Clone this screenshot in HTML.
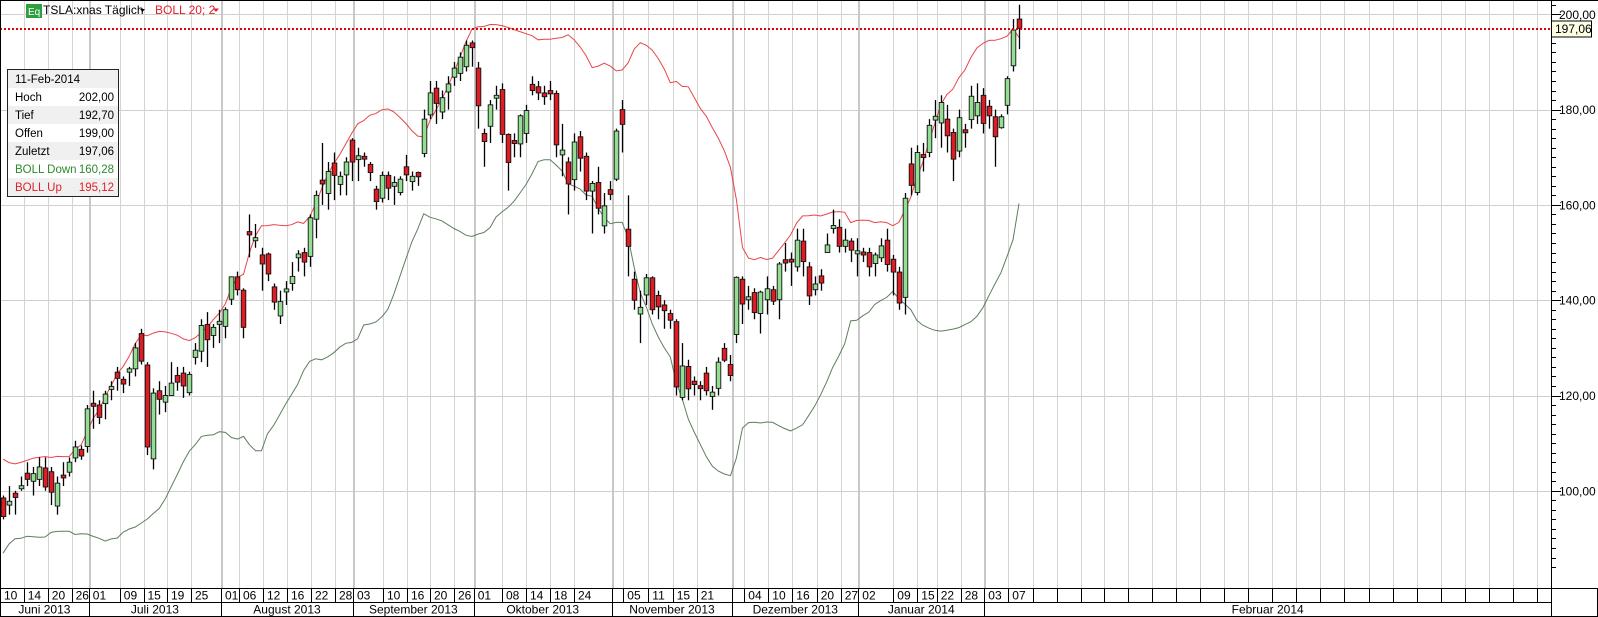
<!DOCTYPE html>
<html><head><meta charset="utf-8"><style>
html,body{margin:0;padding:0;background:#fff;width:1598px;height:617px;overflow:hidden}
svg{display:block;font-family:"Liberation Sans",Arial,sans-serif}
</style></head><body>
<svg id="c" width="1598" height="617" viewBox="0 0 1598 617" xmlns="http://www.w3.org/2000/svg">
<rect x="0" y="0" width="1598" height="617" fill="#fff"/>
<g id="grid"></g>
<g id="bands"></g>
<g id="candles"></g>
<line x1="0" y1="29" x2="1551" y2="29" stroke="#e00000" stroke-width="2" stroke-dasharray="2,2"/>
<line x1="0.5" y1="0" x2="0.5" y2="588" stroke="#000"/>
<line x1="0" y1="0.5" x2="1598" y2="0.5" stroke="#000"/>
<line x1="1551.5" y1="0" x2="1551.5" y2="588" stroke="#000"/>
<g id="axis" font-size="12" fill="#000"></g>
<rect x="1551.5" y="21" width="40" height="16" fill="#ffffe6" stroke="#000"/>
<text x="1555" y="33" font-size="12">197,06</text>
<g id="dates" font-size="12"></g>
<rect x="26" y="4" width="16" height="14" fill="#2e9e3e"/>
<text x="28" y="15" font-size="10" fill="#fff">Eq</text>
<text x="43" y="14" font-size="12" fill="#000">TSLA:xnas Täglich</text>
<path d="M140 9 L145 9 L142.5 12 Z" fill="#000"/>
<text x="155" y="14" font-size="12" fill="#e0202a">BOLL 20; 2</text>
<path d="M213 8.5 L219 8.5 L216 12 Z" fill="#e0202a"/>
<rect x="7.5" y="69.5" width="111" height="127" fill="#fff" stroke="#222"/>
<rect x="8" y="70" width="110" height="18" fill="#f0f0f0"/>
<rect x="8" y="106" width="110" height="18" fill="#f0f0f0"/>
<rect x="8" y="142" width="110" height="18" fill="#f0f0f0"/>
<rect x="8" y="178" width="110" height="18" fill="#f0f0f0"/>
<g font-size="11.5">
<text x="15" y="83">11-Feb-2014</text>
<text x="15" y="101">Hoch</text><text x="114" y="101" text-anchor="end">202,00</text>
<text x="15" y="119">Tief</text><text x="114" y="119" text-anchor="end">192,70</text>
<text x="15" y="137">Offen</text><text x="114" y="137" text-anchor="end">199,00</text>
<text x="15" y="155">Zuletzt</text><text x="114" y="155" text-anchor="end">197,06</text>
<text x="15" y="173" fill="#2a8a2a">BOLL Down</text><text x="114" y="173" text-anchor="end" fill="#2a8a2a">160,28</text>
<text x="15" y="191" fill="#e0202a">BOLL Up</text><text x="114" y="191" text-anchor="end" fill="#e0202a">195,12</text>
</g>
</svg>
<script>
(function(){
var NS="http://www.w3.org/2000/svg";
function el(p,t,a,txt){var e=document.createElementNS(NS,t);for(var k in a)e.setAttribute(k,a[k]);if(txt!==undefined)e.textContent=txt;p.appendChild(e);return e;}
function Y(p){return 14.3+(200-p)*4.765;}
var grid=document.getElementById('grid'),axis=document.getElementById('axis'),dates=document.getElementById('dates');
for(var p=100;p<=200;p+=20){var y=Math.round(Y(p))+0.5;el(grid,'line',{x1:0,y1:y,x2:1551,y2:y,stroke:'#d0d0d0'});
el(axis,'text',{x:1559,y:Y(p)+4.5},(p.toFixed(2)).replace('.',','));}
for(var p=84;p<=202;p+=2){var y=Math.round(Y(p))+0.5;var L=(p%20==0)?10:5;el(axis,'line',{x1:1551,y1:y,x2:1551+L,y2:y,stroke:'#000'});}
var cells=[[0,"10"],[23.7,"14"],[47.8,"20"],[71.6,"26"],[88.8,"01"],[119.8,"09"],[143.5,"15"],[167,"19"],[191,"25"],[221,"01"],[239,"06"],[263,"12"],[287,"16"],[311,"22"],[335,"28"],[353,"03"],[383,"10"],[407,"16"],[430,"20"],[454,"26"],[473.7,"01"],[502,"08"],[526,"14"],[550,"18"],[574,"24"],[611.7,""],[623.3,"05"],[648.3,"11"],[672.7,"15"],[696.7,"21"],[732.3,""],[744.3,"04"],[768.3,"10"],[792.3,"16"],[816.7,"20"],[840.7,"27"],[858.3,"02"],[893.3,"09"],[917.3,"15"],[936.7,"22"],[960.7,"28"],[984.3,"03"],[1008.3,"07"],[1032.7,""],[1056.7,""],[1080.7,""]];
for(var x=1104;x<1540;x+=24.05)cells.push([x,""]);
var months=[0,88.8,221,353,473.7,611.7,732.3,858.3,984.3];
function isMonth(x){for(var i=0;i<months.length;i++)if(Math.abs(months[i]-x)<0.5)return true;return false;}
for(var i=0;i<cells.length;i++){var x=cells[i][0];var xr=Math.round(x)+0.5;
 if(i>0){if(isMonth(x))el(grid,'line',{x1:Math.round(x)+1,y1:0,x2:Math.round(x)+1,y2:588,stroke:'#c8c8c8','stroke-width':2});
 else el(grid,'line',{x1:xr,y1:0,x2:xr,y2:588,stroke:'#d4d4d4'});}
 el(dates,'line',{x1:xr,y1:588,x2:xr,y2:602,stroke:'#000'});
 if(cells[i][1])el(dates,'text',{x:x+4,y:599.5},cells[i][1]);}
el(dates,'line',{x1:0,y1:588.5,x2:1598,y2:588.5,stroke:'#000'});
el(dates,'line',{x1:0,y1:602.5,x2:1551,y2:602.5,stroke:'#000'});
el(dates,'line',{x1:0,y1:616.5,x2:1598,y2:616.5,stroke:'#000'});
el(dates,'line',{x1:1597.5,y1:588,x2:1597.5,y2:617,stroke:'#000'});
var mn=["Juni 2013","Juli 2013","August 2013","September 2013","Oktober 2013","November 2013","Dezember 2013","Januar 2014","Februar 2014"];
var mb=months.concat([1551]);
for(var i=0;i<mn.length;i++){var xr=Math.round(mb[i])+0.5;el(dates,'line',{x1:xr,y1:602,x2:xr,y2:617,stroke:'#000'});
 el(dates,'text',{x:(mb[i]+mb[i+1])/2,y:613.5,'text-anchor':'middle'},mn[i]);}
el(dates,'line',{x1:1551.5,y1:588,x2:1551.5,y2:617,stroke:'#000'});
var D="98.5,94.6,99,94,r|97.8,97,101,95,g|99.5,98.6,100,95,r|101,100.5,103,100,g|103.7,102.4,106,101,r|103.6,102,105,99,g|105,102.4,107,101,g|104.8,100.8,107,100,r|104,99.7,105,97,r|101.6,96.8,103,95,g|103.3,102.7,106,101,r|106,103.9,107,103,g|109.2,106.9,110.5,106,g|108.7,107.3,109.5,106.5,r|117.2,109.3,118,108,g|118.3,117.8,121,113,r|118,115.4,119,114,r|120.3,118.3,121,115,g|121.8,121.4,123,119,g|124.9,123.6,126,121,r|123.4,122.4,124,120.5,r|125.6,124.9,126,122,g|130,125.6,131,124,g|133,127.2,134,126.5,r|126.4,109.2,127,107.5,r|120.5,106.7,121.5,104.5,g|121,119.2,123,116,r|120,118.6,122,116.5,g|122.6,120,127,120,g|124.2,122.8,126,121,r|124.7,122,126,119.5,r|124.4,120.6,125,120,g|129.5,128,131,126.5,g|134.7,129.3,136,127,g|134.9,131.7,137.5,126,r|134.3,132.6,135,130,g|135.5,135,138,131,g|138,134.5,138.5,132,g|144.9,140.2,145,139,g|144.9,142.2,146,141,r|142.1,134.3,142.5,132,r|154.4,153.7,158,149,r|153,152.6,156,151,g|149.5,147.6,151,142,r|149.7,145.5,150,144,r|142.8,139.6,143.5,138,r|139.7,136.7,142,135,g|142.3,141.8,144,139,g|145,143.5,148,142,g|149.7,148.9,150.5,146,g|150,148,151,145,r|157.3,149.2,158,147,g|162,157,163,153,g|165.2,164.4,173,160,r|167,162.4,169,159,g|168.8,166.2,171,161,r|166,164.3,167,162,g|169,166.3,170,162,g|173.6,169,174,165,r|170.3,169.5,172,165,g|170.2,169.6,171,168,r|168.5,166.8,169,165,r|163.3,160.7,164,159,r|166.2,161.4,167,160.5,g|166.2,163.5,167,161,r|164.7,163.9,166,160,g|165.4,162.6,166,162,g|168,166.3,170.5,165,r|166,164.9,167,163,g|166.8,165.9,167,164,r|178,170.8,180,170,g|183.5,178.9,186,178,g|184.5,181.3,186,177,r|182.5,179.5,184,178,g|185.4,183.7,187,180,g|188.7,186.8,190,185,g|191,187.6,192,186,g|193.5,189,194.5,188,g|194,193,194.5,189,r|188.7,180.8,190,176,r|175,173.3,176,168,r|181,176.5,182,173,g|183,182.4,185,180,g|184.2,174.8,185.5,173,r|174.8,168.9,175,163,r|173.4,173,175,170,r|178.7,172.8,179,170,g|179.8,175,181,173,g|185.3,184,187,183,r|184.8,183.5,186,182,r|183.5,182.7,185,181,r|184,183.3,186,182,r|183.4,172.6,184,170,r|171.5,170.5,177,166,g|169,164.4,170,158,r|173.2,165.3,175,163,g|174.3,169.8,175.5,167,r|170.2,162.9,171,161,r|164.5,162.9,165,154,g|164.7,159.3,168,158,r|159.8,155.6,162.5,154,g|163.2,162.2,165,161,r|175.5,165.4,176,165,g|180,176.9,182,171,r|154.9,151.3,162,145,r|144.4,140,146,138,r|138.5,137.1,142,131,g|144.7,141.1,145.5,139,g|144.7,138,145,137,r|141,138.6,142,136,r|139,137.8,140,134,r|137.2,135.8,138,134,r|135.5,121.8,136,120,r|126.2,119.6,131,119,g|126.1,121.4,127.5,119,r|123,122.3,124,120,r|122,121.5,123,119,r|124.7,121,126,120,r|120.7,119.8,122,117,g|127,121.5,128,120,g|129.9,127.4,131,127,r|126.5,124.2,128.5,123,r|144.8,132.8,145,131,g|144.4,139.2,145,135,r|140.6,140.2,143,138,g|141.6,137.4,142.5,136,r|141.7,137.2,142,133,g|142.4,140.1,145,137,g|142.2,139.8,143,139,r|147.6,140.1,148,136,g|148.5,147.8,152,146,r|148.6,148,150,143,r|152.6,147,155,146,g|152.4,148.1,155,145,r|147,140.9,148,139,r|143.4,142.2,145,141,g|145.1,143.6,146.5,142,r|151.6,150,154,150,g|155.6,155.1,159,154,g|155.3,151.3,157,150,r|152.6,151.3,155,150,g|152.4,150.5,153,148,r|150.3,149.8,153,145,g|150,149.6,151,148,r|150,147,151,145,r|149.5,147.7,150,145,g|151.4,148.9,153,148,g|152.6,147.5,155,146,r|148.6,145.9,149.5,141,r|145.9,139.4,147,138,r|161.4,140.6,162.5,137,g|168.6,164.1,172,162,r|171,162.6,172.5,162,g|170.5,170,173,167,r|176.7,171,178,170,g|178.6,177.8,182,174,g|181.5,177.2,183,172,g|178,174.5,181,171,r|175.2,169.6,176,165,r|178.3,171.3,180,170,g|175.7,175.2,177,172,r|182.8,177.9,185,176,g|181.5,178.7,185.5,177,g|183,177.1,184.5,175,r|180.7,178.7,182,176,r|178.5,174.3,180,168,r|178.5,176.2,179,176,g|186.5,180.9,187,179,g|196.7,189.2,199,188,g|199,197.06,202,192.7,r";
var rows=D.split('|').map(function(s){var a=s.split(',');return {t:+a[0],b:+a[1],h:+a[2],l:+a[3],g:a[4]=='g'};});
var N=rows.length,step=(1019-3)/(N-1);
var closes=[86,90,97,94,100,104,99,92,97,103,106,101,96,90,95,101,99,94,97];
rows.forEach(function(r){closes.push(r.g?r.t:r.b);});
var up=[],dn=[];
for(var i=0;i<N;i++){var j=i+19,s=0;for(var k=j-19;k<=j;k++)s+=closes[k];var m=s/20,v=0;for(var k=j-19;k<=j;k++)v+=(closes[k]-m)*(closes[k]-m);var sd=Math.sqrt(v/20);
 var x=(3+i*step).toFixed(1);up.push(x+','+Y(m+2*sd).toFixed(1));dn.push(x+','+Y(m-2*sd).toFixed(1));}
var bands=document.getElementById('bands');
el(bands,'polyline',{points:up.join(' '),fill:'none',stroke:'#e8454a','stroke-width':1});
el(bands,'polyline',{points:dn.join(' '),fill:'none',stroke:'#5e7e5e','stroke-width':1});
var cg=document.getElementById('candles');
rows.forEach(function(r,i){var x=Math.round(3+i*step)+0.5;
 el(cg,'line',{x1:x,y1:Y(r.h),x2:x,y2:Y(r.l),stroke:'#000','stroke-width':1.3});
 var yt=Y(r.t),yb=Y(r.b);if(yb-yt<2.5){var c=(yt+yb)/2;yt=c-1.5;yb=c+1.5;}
 el(cg,'rect',{x:x-2.3,y:yt,width:4.6,height:yb-yt,fill:r.g?'#93de93':'#dd1c24',stroke:'#111','stroke-width':0.9});});
})();
</script>
</body></html>
